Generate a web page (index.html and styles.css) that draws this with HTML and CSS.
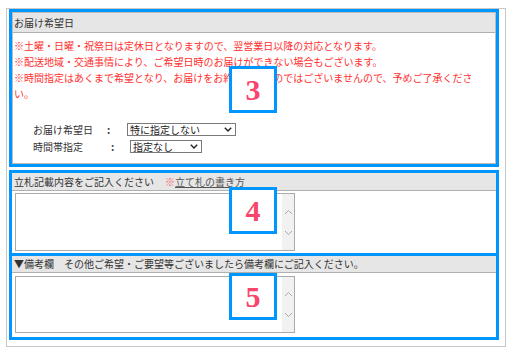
FILE: index.html
```html
<!DOCTYPE html>
<html lang="ja">
<head>
    <meta charset="UTF-8">
    <meta name="viewport" content="width=device-width, initial-scale=1.0">
    <title>お届け情報</title>
    <link rel="stylesheet" href="styles.css">
</head>
<body>
    <div class="frame">
        <section class="mark mark--date">
            <div class="panel">
                <h2 class="panel-title">お届け希望日</h2>
                <div class="panel-body">
                    <p class="notice">※土曜・日曜・祝祭日は定休日となりますので、翌営業日以降の対応となります。<br>※配送地域・交通事情により、ご希望日時のお届けができない場合もございます。<br>※時間指定はあくまで希望となり、お届けをお約束するものではございませんので、予めご了承ください。</p>

                    <div class="field-row">
                        <span class="field-label">お届け希望日</span>
                        <span class="field-colon">:</span>
                        <div class="select select--date">
                            <span>特に指定しない</span>
                            <svg class="select-arrow" width="8" height="5" viewBox="0 0 8 5"><path d="M0.8 0.8 L4 4 L7.2 0.8" fill="none" stroke="#222" stroke-width="1.4"/></svg>
                        </div>
                    </div>
                    <div class="field-row field-row--time">
                        <span class="field-label">時間帯指定</span>
                        <span class="field-colon">:</span>
                        <div class="select select--time">
                            <span>指定なし</span>
                            <svg class="select-arrow" width="8" height="5" viewBox="0 0 8 5"><path d="M0.8 0.8 L4 4 L7.2 0.8" fill="none" stroke="#222" stroke-width="1.4"/></svg>
                        </div>
                    </div>
                </div>
            </div>
            <div class="badge badge--date">3</div>
        </section>

        <section class="mark mark--sign">
            <h2 class="panel-title panel-title--sign">立札記載内容をご記入ください<span class="hint"><span class="hint-mark">※</span><a class="hint-link">立て札の書き方</a></span></h2>
            <div class="area-wrap area-wrap--sign">
                <div class="textarea textarea--sign">
                    <div class="scrollbar">
                        <svg width="9" height="6" viewBox="0 0 9 6"><path d="M1 5 L4.5 1.5 L8 5" fill="none" stroke="#a8a8a8" stroke-width="1"/></svg>
                        <svg width="9" height="6" viewBox="0 0 9 6"><path d="M1 1 L4.5 4.5 L8 1" fill="none" stroke="#a8a8a8" stroke-width="1"/></svg>
                    </div>
                </div>
            </div>
            <div class="badge badge--sign">4</div>
        </section>

        <section class="mark mark--note">
            <h2 class="panel-title panel-title--note">▼備考欄　その他ご希望・ご要望等ございましたら備考欄にご記入ください。</h2>
            <div class="area-wrap area-wrap--note">
                <div class="textarea textarea--note">
                    <div class="scrollbar">
                        <svg width="9" height="6" viewBox="0 0 9 6"><path d="M1 5 L4.5 1.5 L8 5" fill="none" stroke="#a8a8a8" stroke-width="1"/></svg>
                        <svg width="9" height="6" viewBox="0 0 9 6"><path d="M1 1 L4.5 4.5 L8 1" fill="none" stroke="#a8a8a8" stroke-width="1"/></svg>
                    </div>
                </div>
            </div>
            <div class="badge badge--note">5</div>
        </section>
    </div>
</body>
</html>
```

FILE: styles.css
```css
* {
    box-sizing: border-box;
    margin: 0;
    padding: 0;
}

body {
    background-color: #fff;
    font-family: "Noto Sans CJK JP", "DejaVu Sans", sans-serif;
    font-size: 10px;
    color: #333;
}

.frame {
    width: 500px;
    height: 339px;
    margin: 8px 0 0 6px;
    padding: 0 6px 0 2px;
    border: 1px solid #c8c8c8;
}

.mark {
    position: relative;
    border: 3px solid #0096ff;
    background-color: #fff;
}

.mark--date {
    height: 158px;
}

.mark--sign {
    height: 86px;
    margin-top: 3px;
}

.mark--note {
    height: 87px;
    margin-top: -3px;
}

.panel {
    height: 100%;
    border: 1px solid #bcbcbc;
}

.panel-title {
    height: 20px;
    padding-left: 1px;
    line-height: 19px;
    font-size: 10px;
    font-weight: normal;
    color: #333;
    background-color: #e6e6e6;
    border-bottom: 1px solid #b0b0b0;
    white-space: nowrap;
}

.panel-title--sign {
    height: 18px;
    padding-left: 2px;
    line-height: 17px;
}

.panel-title--note {
    height: 17px;
    padding-left: 2px;
    line-height: 16px;
}

.panel-body {
    padding: 5px 11px 10px 1px;
}

.notice {
    line-height: 16px;
    color: #ff2f2f;
}

.field-row {
    display: flex;
    align-items: center;
    height: 13px;
    margin-top: 21px;
    padding-left: 19px;
}

.field-row--time {
    margin-top: 4px;
}

.field-label {
    width: 74px;
    color: #333;
}

.field-colon {
    width: 20px;
    font-weight: bold;
}

.field-row--time .field-label {
    width: 78px;
}

.field-row--time .field-colon {
    width: 19px;
}

.select {
    display: flex;
    align-items: center;
    justify-content: space-between;
    height: 13px;
    padding: 0 3px 0 2px;
    line-height: 11px;
    border: 1px solid #7a7a7a;
    background-color: #fff;
    color: #222;
}

.select--date {
    width: 109px;
}

.select--time {
    width: 72px;
}

.hint {
    margin-left: 11px;
}

.hint-mark {
    color: #ff5a5a;
}

.hint-link {
    color: #555;
    text-decoration: underline;
}

.area-wrap--sign {
    padding: 2px 0 0 3px;
}

.area-wrap--note {
    padding: 3px 0 0 3px;
}

.textarea {
    display: flex;
    justify-content: flex-end;
    width: 280px;
    border: 1px solid #aaa;
    background-color: #fff;
}

.textarea--sign {
    height: 58px;
}

.textarea--note {
    height: 57px;
}

.scrollbar {
    display: flex;
    flex-direction: column;
    align-items: center;
    justify-content: center;
    gap: 15px;
    width: 12px;
    background-color: #f1f1f1;
}

.badge {
    position: absolute;
    left: 217px;
    display: flex;
    align-items: center;
    justify-content: center;
    width: 48px;
    height: 47px;
    border: 3px solid #0096ff;
    background-color: #fff;
    color: #f8466b;
    font-family: "Liberation Serif", serif;
    font-size: 30px;
    font-weight: bold;
}

.badge--date {
    top: 54px;
}

.badge--sign {
    top: 14px;
}

.badge--note {
    top: 17px;
}
```
